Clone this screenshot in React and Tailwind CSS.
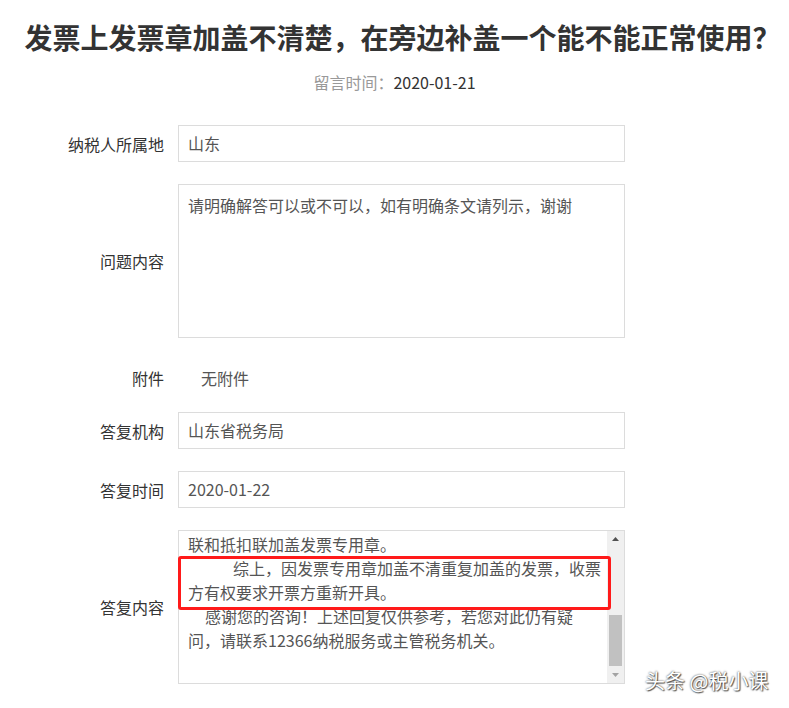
import React from 'react';

const FONT = { fontFamily: '"Microsoft YaHei", "Noto Sans CJK SC", "Noto Sans", sans-serif' };

function Row({ label, children, className = '' }) {
  return (
    <div className={`flex items-center ${className}`}>
      <div className="w-[164px] shrink-0 text-right text-[16px] text-[#333]">{label}</div>
      <div className="ml-[14px] w-[447px]">{children}</div>
    </div>
  );
}

function Field({ value }) {
  return (
    <div className="h-[37px] border border-[#dcdcdc] bg-white px-[9px] text-[16px] leading-[35px] text-[#555]">
      {value}
    </div>
  );
}

export default function App() {
  return (
    <div className="relative h-[708px] w-[789px] overflow-hidden bg-white" style={FONT}>
      <h1 className="pl-[16px] pt-[18px] text-center text-[28px] font-bold leading-[38px] text-[#333]">
        发票上发票章加盖不清楚，在旁边补盖一个能不能正常使用？
      </h1>
      <p className="mt-[15px] text-center text-[16px] leading-[22px]">
        <span className="text-[#999]">留言时间：</span>
        <span className="text-[#333]">2020-01-21</span>
      </p>

      <div className="mt-[32px] flex flex-col gap-[22px]">
        <Row label="纳税人所属地">
          <Field value="山东" />
        </Row>

        <Row label="问题内容">
          <div className="h-[154px] border border-[#dcdcdc] bg-white px-[9px] pt-[8px] text-[16px] leading-[24px] text-[#555]">
            请明确解答可以或不可以，如有明确条文请列示，谢谢
          </div>
        </Row>

        <Row label="附件" className="h-[30px] pt-[6px]">
          <div className="pl-[23px] text-[16px] text-[#555]">无附件</div>
        </Row>

        <Row label="答复机构">
          <Field value="山东省税务局" />
        </Row>

        <Row label="答复时间">
          <Field value="2020-01-22" />
        </Row>

        <Row label="答复内容">
          <div className="relative flex h-[154px] border border-[#dcdcdc] bg-white">
            <div className="flex-1 overflow-hidden pl-[9px] pt-[1px] text-[16px] leading-[24px] text-[#555]">
              <div className="whitespace-nowrap">联和抵扣联加盖发票专用章。</div>
              <div className="whitespace-nowrap pl-[45px]">综上，因发票专用章加盖不清重复加盖的发票，收票</div>
              <div className="whitespace-nowrap">方有权要求开票方重新开具。</div>
              <div className="whitespace-nowrap pl-[17px]">感谢您的咨询！上述回复仅供参考，若您对此仍有疑</div>
              <div className="whitespace-nowrap">问，请联系12366纳税服务或主管税务机关。</div>
            </div>
            <div className="flex w-[17px] flex-col items-center bg-[#f0f0f0]">
              <div className="flex h-[17px] items-center justify-center">
                <svg width="7" height="4" viewBox="0 0 7 4"><path d="M3.5 0L7 4H0z" fill="#505050" /></svg>
              </div>
              <div className="flex-1 w-full px-[2px] pt-[67px] pb-[1px]">
                <div className="h-[51px] w-full bg-[#c1c1c1]" />
              </div>
              <div className="flex h-[17px] items-center justify-center">
                <svg width="7" height="4" viewBox="0 0 7 4"><path d="M0 0H7L3.5 4z" fill="#a3a3a3" /></svg>
              </div>
            </div>
            <div className="absolute left-[-1px] top-[25px] h-[54px] w-[433px] rounded-[3px] border-[3px] border-[#ff1a1a]" />
          </div>
        </Row>
      </div>

      <div
        className="absolute left-[645px] top-[668px] text-[20px] leading-[26px] text-white"
        style={{ textShadow: '0 0 2px rgba(0,0,0,0.8), 1px 1px 1px rgba(0,0,0,0.6)' }}
      >
        头条 @税小课
      </div>
    </div>
  );
}
